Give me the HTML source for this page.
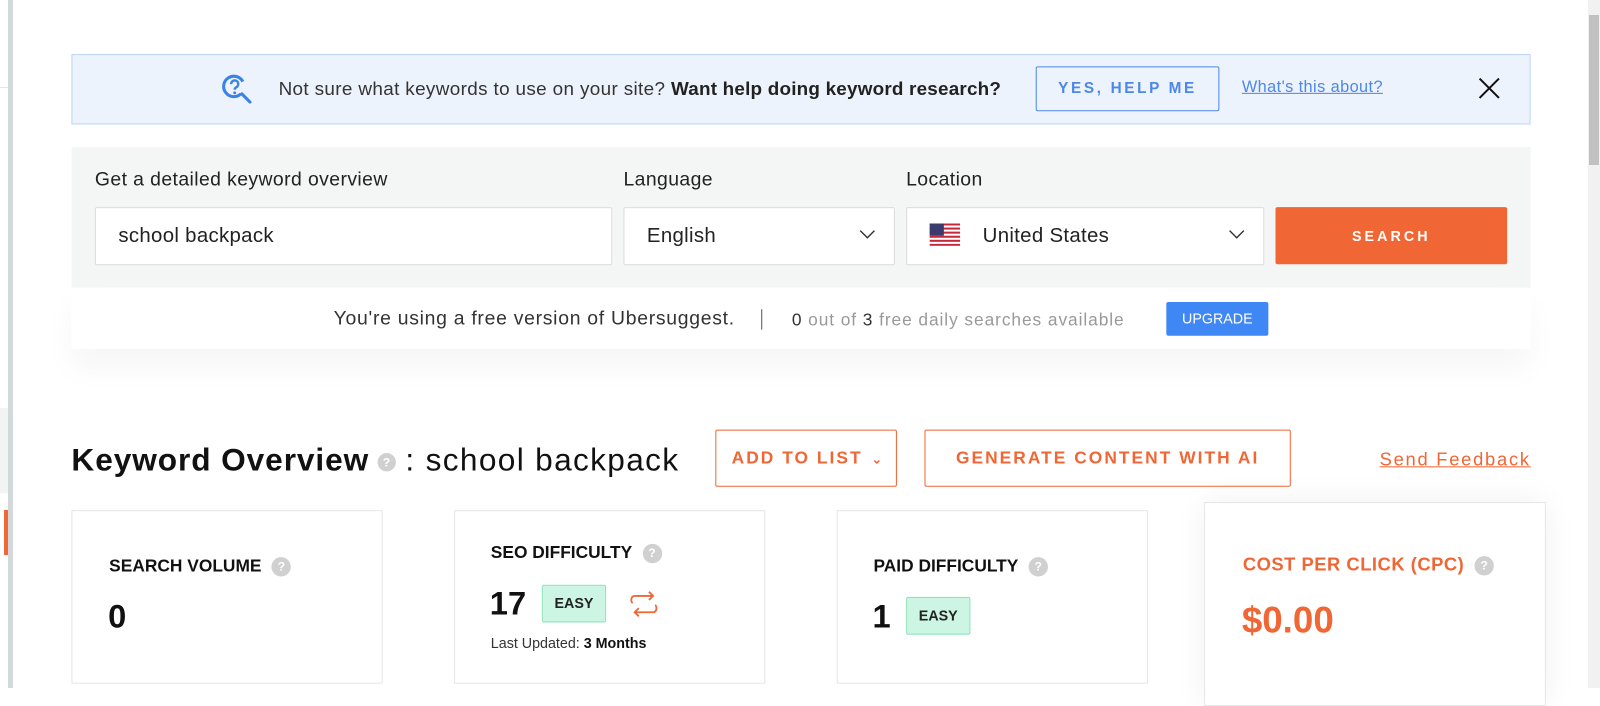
<!DOCTYPE html>
<html><head><meta charset="utf-8"><style>
*{box-sizing:border-box;margin:0;padding:0}
body{width:1600px;height:688px;overflow:hidden;background:#fff;font-family:"Liberation Sans",sans-serif;color:#222;position:relative}
.abs{position:absolute}
#w{position:absolute;left:0;top:0;width:1568px;height:674px;transform:scale(1.0204);transform-origin:0 0}
.leftbar{left:8px;top:0;width:5px;height:688px;background:#d3d9da}
.sb{left:1588px;top:0;width:12px;height:688px;background:#f1f1f1}
.thumb{left:1589px;top:15px;width:10px;height:150px;background:#c1c1c1}
.banner{left:70px;top:53px;width:1430px;height:69px;background:#edf3fd;border:1px solid #bcd4f7}
.help{left:1015px;top:65px;width:180px;height:44px;border:1.5px solid #4d87e8;border-radius:2px;color:#4d87e8;font-weight:bold;font-size:15px;letter-spacing:2.6px;text-align:center;line-height:42px}
.search{left:70px;top:144px;width:1430px;height:138px;background:#f4f5f5}
.lbl{font-size:19px;color:#222;letter-spacing:0.4px}
.inp{background:#fff;border:1px solid #dcdcdc;border-radius:2px;height:57px;font-size:20px;line-height:55px;padding-left:22px;letter-spacing:0.3px}
.btn{left:1250px;top:203px;width:227px;height:56px;background:#f06634;border-radius:2px;color:#fff;font-weight:bold;letter-spacing:3px;font-size:14px;text-align:center;line-height:56px}
.free{left:70px;top:282px;width:1430px;height:60px;background:#fff;box-shadow:0 18px 30px rgba(0,0,0,0.04)}
.obtn{height:56px;border:1.5px solid #f06634;color:#f06634;font-weight:bold;font-size:17px;letter-spacing:2px;line-height:53px;text-align:center;border-radius:2px}
.card{border:1px solid #e6e6e6;background:#fff}
.ct{font-weight:bold;font-size:17px;color:#111}
.q{display:inline-block;width:19px;height:19px;border-radius:50%;background:#d0d0d0;color:#fff;font-size:12px;text-align:center;line-height:19px;font-weight:bold;vertical-align:middle;margin-left:10px;letter-spacing:0}
.num{font-weight:bold;font-size:32px;color:#111}
.easy{background:#cdf5e3;border:1px solid #8fe3bd;border-radius:2px;font-weight:bold;font-size:14px;width:63px;height:37px;line-height:35px;text-align:center;color:#222}
</style></head><body>
<div class="abs" style="left:0;top:87px;width:8px;height:1px;background:#e6e6e6"></div>
<div class="abs" style="left:0;top:408px;width:8px;height:85px;background:#f2f4f4"></div>
<div class="abs" style="left:4px;top:510px;width:4px;height:45px;background:#f06634"></div>
<div class="abs leftbar"></div>
<div class="abs sb"></div><div class="abs thumb"></div>
<div id="w">
<div class="abs banner"></div>
<svg class="abs" style="left:217px;top:70px" width="32" height="34" viewBox="0 0 32 34"><path d="M21 10A10 10 0 1 0 19 22" fill="none" stroke="#3b82e6" stroke-width="3"/><path d="M20 22l8 8" stroke="#3b82e6" stroke-width="3" stroke-linecap="round"/><path d="M9.5 12.5a3.5 3.5 0 1 1 5 3c-1.3.8-1.5 1.5-1.5 2.5" fill="none" stroke="#3b82e6" stroke-width="2.4"/><circle cx="13" cy="21" r="1.4" fill="#3b82e6"/></svg>
<div class="abs" style="left:273px;top:76px;font-size:18.5px;color:#333;letter-spacing:0.35px;white-space:nowrap">Not sure what keywords to use on your site? <b style="color:#222;letter-spacing:0.2px">Want help doing keyword research?</b></div>
<div class="abs help">YES, HELP ME</div>
<div class="abs" style="left:1217px;top:77px;font-size:16px;color:#4d87e8;text-decoration:underline;letter-spacing:0.4px">What's this about?</div>
<svg class="abs" style="left:1449px;top:76px" width="21" height="21"><path d="M1 1L20 20M20 1L1 20" stroke="#111" stroke-width="2"/></svg>

<div class="abs search"></div>
<div class="abs lbl" style="left:93px;top:166px">Get a detailed keyword overview</div>
<div class="abs lbl" style="left:611px;top:166px">Language</div>
<div class="abs lbl" style="left:888px;top:166px">Location</div>
<div class="abs inp" style="left:93px;top:203px;width:507px">school backpack</div>
<div class="abs inp" style="left:611px;top:203px;width:266px">English</div>
<div class="abs inp" style="left:888px;top:203px;width:351px;padding-left:74px">United States</div>
<svg class="abs" style="left:842px;top:225px" width="16" height="10"><path d="M1 1l7 7 7-7" fill="none" stroke="#333" stroke-width="1.4"/></svg>
<svg class="abs" style="left:1204px;top:225px" width="16" height="10"><path d="M1 1l7 7 7-7" fill="none" stroke="#333" stroke-width="1.4"/></svg>
<svg class="abs" style="left:911px;top:219px" width="30" height="22" viewBox="0 0 30 22"><rect width="30" height="22" fill="#fff"/><g fill="#c8283c"><rect y="0" width="30" height="2"/><rect y="4" width="30" height="2"/><rect y="8" width="30" height="2"/><rect y="12" width="30" height="2"/><rect y="16" width="30" height="2"/><rect y="20" width="30" height="2"/></g><rect width="14" height="12" fill="#3c3b6e"/></svg>
<div class="abs btn">SEARCH</div>

<div class="abs free"></div>
<div class="abs" style="left:327px;top:302px;font-size:19px;color:#333;letter-spacing:0.7px;white-space:nowrap">You're using a free version of Ubersuggest.</div>
<div class="abs" style="left:746px;top:303px;width:1px;height:20px;background:#555"></div>
<div class="abs" style="left:776px;top:304px;font-size:17px;color:#999;letter-spacing:0.9px;white-space:nowrap"><span style="color:#333">0</span> out of <span style="color:#333">3</span> free daily searches available</div>
<div class="abs" style="left:1143px;top:296px;width:100px;height:33px;background:#3f87f5;border-radius:2px;color:#fff;font-size:14px;text-align:center;line-height:33px">UPGRADE</div>

<div class="abs" style="left:70px;top:433px;font-size:31px;font-weight:bold;color:#111;letter-spacing:0.9px;white-space:nowrap">Keyword Overview<span class="q" style="width:18px;height:18px;line-height:18px;margin-left:8px">?</span> <span style="font-weight:normal;letter-spacing:1.3px">: school backpack</span></div>
<div class="abs obtn" style="left:701px;top:421px;width:178px;text-align:left;padding-left:15px">ADD TO LIST <span style="font-size:12px;margin-left:2px">&#8964;</span></div>
<div class="abs obtn" style="left:906px;top:421px;width:359px">GENERATE CONTENT WITH AI</div>
<div class="abs" style="left:1352px;top:440px;font-size:18px;color:#f06634;text-decoration:underline;letter-spacing:1.7px">Send Feedback</div>

<div class="abs card" style="left:70px;top:500px;width:305px;height:170px"></div>
<div class="abs ct" style="left:107px;top:545px">SEARCH VOLUME<span class="q">?</span></div>
<div class="abs num" style="left:106px;top:586px">0</div>

<div class="abs card" style="left:445px;top:500px;width:305px;height:170px"></div>
<div class="abs ct" style="left:481px;top:532px">SEO DIFFICULTY<span class="q">?</span></div>
<div class="abs num" style="left:480px;top:573px">17</div>
<div class="abs easy" style="left:531px;top:573px">EASY</div>
<svg class="abs" style="left:616px;top:578px" width="30" height="28" viewBox="0 0 30 28"><path d="M6 6h18M20 2l4 4-4 4M24 22H6M10 18l-4 4 4 4" fill="none" stroke="#f06634" stroke-width="1.8"/><path d="M6 6c-4 0-4 6-2 7M24 22c4 0 4-6 2-7" fill="none" stroke="#f06634" stroke-width="1.8"/></svg>
<div class="abs" style="left:481px;top:622px;font-size:14px;color:#333">Last Updated: <b style="color:#111">3 Months</b></div>

<div class="abs card" style="left:820px;top:500px;width:305px;height:170px"></div>
<div class="abs ct" style="left:856px;top:545px">PAID DIFFICULTY<span class="q">?</span></div>
<div class="abs num" style="left:855px;top:586px">1</div>
<div class="abs easy" style="left:888px;top:585px">EASY</div>

<div class="abs card" style="left:1180px;top:492px;width:335px;height:200px;box-shadow:0 0 30px rgba(0,0,0,0.06)"></div>
<div class="abs ct" style="left:1218px;top:543px;color:#f06634;font-size:18px;letter-spacing:0.5px">COST PER CLICK (CPC)<span class="q">?</span></div>
<div class="abs num" style="left:1217px;top:587px;color:#f06634;font-size:36px">$0.00</div>
</div>
</body></html>
